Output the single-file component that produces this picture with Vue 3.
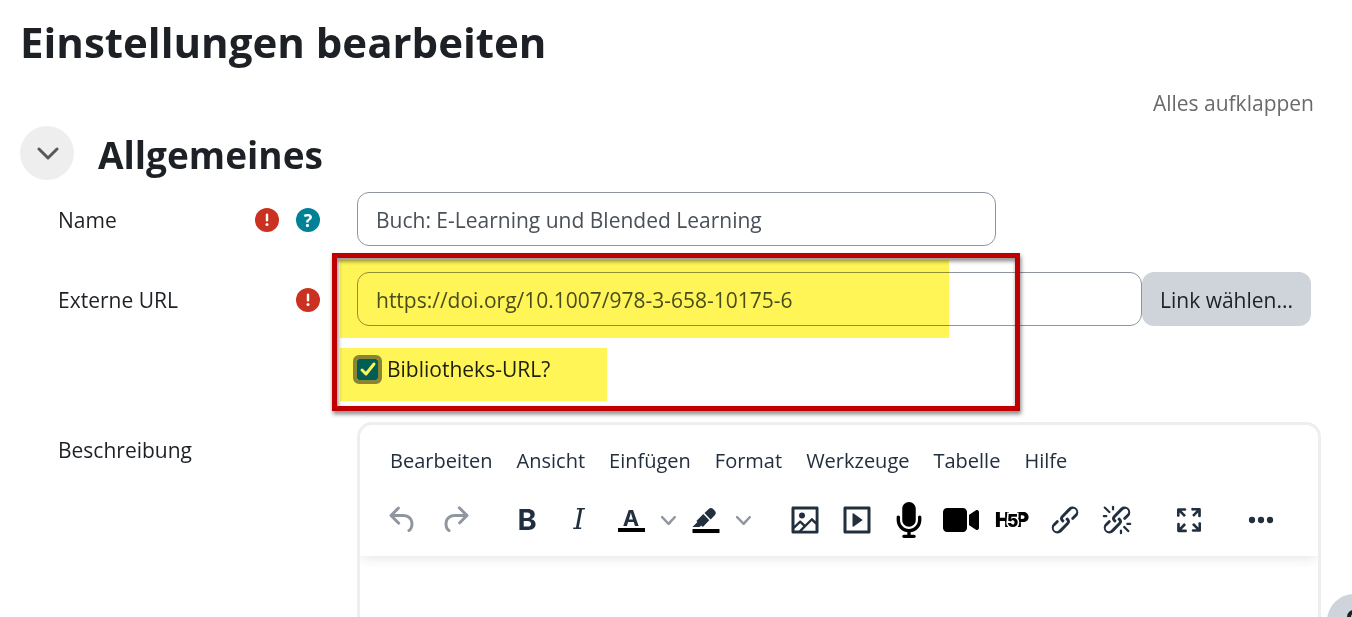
<script setup>
import { ref } from 'vue'

const name = ref('Buch: E-Learning und Blended Learning')
const url = ref('https://doi.org/10.1007/978-3-658-10175-6')
const isLibraryUrl = ref(true)

const menus = ['Bearbeiten', 'Ansicht', 'Einfügen', 'Format', 'Werkzeuge', 'Tabelle', 'Hilfe']
</script>

<template>
  <main class="page">
    <h1 class="title">Einstellungen bearbeiten</h1>

    <div class="expand-row">
      <a href="#" class="expand-all">Alles aufklappen</a>
    </div>

    <form class="form" @submit.prevent>
      <div class="section-head">
        <button type="button" class="toggle" aria-label="Allgemeines einklappen" aria-expanded="true">
          <svg width="24" height="24" viewBox="0 0 24 24" fill="none" stroke="#585858" stroke-width="3" stroke-linecap="round" stroke-linejoin="round">
            <path d="M4 8l9 9 9-9" />
          </svg>
        </button>
        <h2 class="section-title">Allgemeines</h2>
      </div>

      <div class="row">
        <div class="label-cell">
          <label for="name">Name</label>
          <span class="marks">
            <svg class="mark" viewBox="0 0 24 24" role="img" aria-label="Erforderlich">
              <circle cx="12" cy="12" r="12" fill="#ca3120" />
              <path d="M12 6.8v5.4" stroke="#fff" stroke-width="2.4" stroke-linecap="round" />
              <circle cx="12" cy="16.6" r="1.5" fill="#fff" />
            </svg>
            <button type="button" class="help" aria-label="Hilfe zu Name">?</button>
          </span>
        </div>
        <div class="field-cell">
          <input id="name" v-model="name" class="text-input name-input" type="text" />
        </div>
      </div>

      <div class="row url-row">
        <div class="label-cell">
          <label for="url">Externe URL</label>
          <span class="marks">
            <svg class="mark" viewBox="0 0 24 24" role="img" aria-label="Erforderlich">
              <circle cx="12" cy="12" r="12" fill="#ca3120" />
              <path d="M12 6.8v5.4" stroke="#fff" stroke-width="2.4" stroke-linecap="round" />
              <circle cx="12" cy="16.6" r="1.5" fill="#fff" />
            </svg>
          </span>
        </div>
        <div class="field-cell">
          <div class="url-group">
            <input id="url" v-model="url" class="text-input url-input" type="text" />
            <button type="button" class="choose">Link wählen...</button>
          </div>
          <div class="check-row">
            <input id="library" v-model="isLibraryUrl" type="checkbox" class="check" />
            <label for="library">Bibliotheks-URL?</label>
          </div>
          <div class="highlight highlight-url"></div>
          <div class="highlight highlight-check"></div>
          <div class="frame"></div>
        </div>
      </div>

      <div class="row">
        <div class="label-cell">
          <label for="description">Beschreibung</label>
        </div>
        <div class="editor">
          <div class="editor-head">
            <div class="menubar">
              <button v-for="menu in menus" :key="menu" type="button" class="menu">{{ menu }}</button>
            </div>
            <div class="toolbar">
              <div class="group">
                <button type="button" class="tool muted" aria-label="Rückgängig">
                  <svg class="icon" viewBox="0 0 24 24"><path d="M6.4 8H12c3.7 0 6.2 2 6.8 5.1.6 2.7-.4 5.6-2.3 6.8a1 1 0 0 1-1-1.8c1.1-.6 1.8-2.7 1.4-4.6-.5-2.1-2.1-3.5-4.9-3.5H6.4l3.3 3.3a1 1 0 1 1-1.4 1.4l-5-5a1 1 0 0 1 0-1.4l5-5a1 1 0 0 1 1.4 1.4L6.4 8Z" /></svg>
                </button>
                <button type="button" class="tool muted" aria-label="Wiederholen">
                  <svg class="icon" viewBox="0 0 24 24"><path d="M17.6 10H12c-2.8 0-4.4 1.4-4.9 3.5-.4 2 .3 4 1.4 4.6a1 1 0 1 1-1 1.8c-2-1.2-2.9-4.1-2.3-6.8.6-3 3-5.1 6.8-5.1h5.6l-3.3-3.3a1 1 0 1 1 1.4-1.4l5 5a1 1 0 0 1 0 1.4l-5 5a1 1 0 0 1-1.4-1.4l3.3-3.3Z" /></svg>
                </button>
              </div>

              <div class="group">
                <button type="button" class="tool bold" aria-label="Fett">B</button>
                <button type="button" class="tool italic" aria-label="Kursiv">I</button>
                <span class="split">
                  <button type="button" class="tool color" aria-label="Textfarbe">
                    <span class="color-letter">A</span>
                    <span class="swatch"></span>
                  </button>
                  <button type="button" class="chevron" aria-label="Textfarbe wählen">
                    <svg width="15" height="15" viewBox="0 0 10 10"><path d="M8.7 2.2c.3-.3.8-.3 1 0 .4.4.4.9 0 1.2L5.7 7.8c-.3.3-.9.3-1.2 0L.2 3.4a.8.8 0 0 1 0-1.2c.3-.3.8-.3 1.1 0L5 6l3.7-3.8Z" /></svg>
                  </button>
                  <button type="button" class="tool" aria-label="Hintergrundfarbe">
                    <svg class="icon" viewBox="0 0 24 24">
                      <path d="M7.7 16.7H3l3.3-3.3-.7-.8L10.2 8l4 4.1-4 4.2c-.2.2-.6.2-.8 0l-.6-.7-1.1 1.1zm5-7.5L11 7.4l3-2.9a2 2 0 0 1 2.6 0L18 6c.7.7.7 2 0 2.7l-2.9 2.9-1.8-1.8-.5-.6" />
                      <path d="M3 18h18v2.7H3z" fill="#000" />
                    </svg>
                  </button>
                  <button type="button" class="chevron" aria-label="Hintergrundfarbe wählen">
                    <svg width="15" height="15" viewBox="0 0 10 10"><path d="M8.7 2.2c.3-.3.8-.3 1 0 .4.4.4.9 0 1.2L5.7 7.8c-.3.3-.9.3-1.2 0L.2 3.4a.8.8 0 0 1 0-1.2c.3-.3.8-.3 1.1 0L5 6l3.7-3.8Z" /></svg>
                  </button>
                </span>
              </div>

              <div class="group">
                <button type="button" class="tool" aria-label="Bild">
                  <svg class="icon" viewBox="0 0 24 24"><path fill-rule="evenodd" d="m5 15.7 3.3-3.2c.3-.3.7-.3 1 0L12 15l4.1-4c.3-.4.8-.4 1 0l2 1.9V5H5v10.7ZM5 18V19h3l2.8-2.9-2-2L5 17.9Zm14-3-2.5-2.4-6.4 6.5H19v-4ZM4 3h16c.6 0 1 .4 1 1v16c0 .6-.4 1-1 1H4a1 1 0 0 1-1-1V4c0-.6.4-1 1-1Zm6 8a2 2 0 1 0 0-4 2 2 0 0 0 0 4Z" /></svg>
                </button>
                <button type="button" class="tool" aria-label="Multimedia">
                  <svg class="icon" viewBox="0 0 24 24"><path fill-rule="evenodd" d="M4 3h16c.6 0 1 .4 1 1v16c0 .6-.4 1-1 1H4a1 1 0 0 1-1-1V4c0-.6.4-1 1-1Zm1 2v14h14V5H5Zm4.8 2.6 5.6 4a.5.5 0 0 1 0 .8l-5.6 4A.5.5 0 0 1 9 16V8a.5.5 0 0 1 .8-.4Z" /></svg>
                </button>
                <button type="button" class="tool media" aria-label="Audio aufnehmen">
                  <svg class="icon" viewBox="0 0 384 512"><path d="M192 0C139 0 96 43 96 96V256c0 53 43 96 96 96s96-43 96-96V96c0-53-43-96-96-96zM64 216c0-13.3-10.7-24-24-24s-24 10.7-24 24v40c0 89.1 66.2 162.7 152 174.4V464H120c-13.3 0-24 10.7-24 24s10.7 24 24 24h72 72c13.3 0 24-10.7 24-24s-10.7-24-24-24H216V430.4c85.8-11.7 152-85.3 152-174.4V216c0-13.3-10.7-24-24-24s-24 10.7-24 24v40c0 70.7-57.3 128-128 128s-128-57.3-128-128V216z" /></svg>
                </button>
                <button type="button" class="tool media" aria-label="Video aufnehmen">
                  <svg class="icon" viewBox="0 0 576 512"><path d="M0 128C0 92.7 28.7 64 64 64H320c35.3 0 64 28.7 64 64V384c0 35.3-28.7 64-64 64H64c-35.3 0-64-28.7-64-64V128zM559.1 99.8c10.4 5.6 16.9 16.4 16.9 28.2V384c0 11.8-6.5 22.6-16.9 28.2s-23 5-32.9-1.6l-96-64L416 337.1V320 192 174.9l14.2-9.5 96-64c9.8-6.5 22.4-7.2 32.9-1.6z" /></svg>
                </button>
                <button type="button" class="tool media" aria-label="H5P">
                  <svg class="icon h5p" viewBox="0 0 36 36">
                    <text x="0" y="25">H</text>
                    <text x="21" y="25">P</text>
                    <path d="M10 17h13v3H10z" />
                    <text class="five" x="12" y="25">5</text>
                  </svg>
                </button>
                <button type="button" class="tool" aria-label="Link">
                  <svg class="icon" viewBox="0 0 24 24"><path d="M6.2 12.3a1 1 0 0 1 1.4 1.4l-2 2a2 2 0 1 0 2.6 2.8l4.8-4.8a1 1 0 0 0 0-1.4 1 1 0 1 1 1.4-1.3 2.9 2.9 0 0 1 0 4L9.6 20a3.9 3.9 0 0 1-5.5-5.5l2-2Zm11.6-.6a1 1 0 0 1-1.4-1.4l2-2a2 2 0 1 0-2.6-2.8L11 10.3a1 1 0 0 0 0 1.4A1 1 0 1 1 9.6 13a2.9 2.9 0 0 1 0-4L14.4 4a3.9 3.9 0 0 1 5.5 5.5l-2 2Z" /></svg>
                </button>
                <button type="button" class="tool" aria-label="Link entfernen">
                  <svg class="icon" viewBox="0 0 24 24"><path d="M6.2 12.3a1 1 0 0 1 1.4 1.4l-2 2a2 2 0 1 0 2.6 2.8l4.8-4.8a1 1 0 0 0 0-1.4 1 1 0 1 1 1.4-1.3 2.9 2.9 0 0 1 0 4L9.6 20a3.9 3.9 0 0 1-5.5-5.5l2-2Zm11.6-.6a1 1 0 0 1-1.4-1.4l2.1-2a2 2 0 1 0-2.7-2.8L11 10.3a1 1 0 0 0 0 1.4A1 1 0 1 1 9.6 13a2.9 2.9 0 0 1 0-4L14.4 4a3.9 3.9 0 0 1 5.5 5.5l-2 2ZM7.6 6.3a.8.8 0 0 1-1 1.1L3.3 4.2a.7.7 0 1 1 1-1l3.2 3.1ZM5.1 8.6a.8.8 0 0 1 0 1.5H3a.8.8 0 0 1 0-1.5H5Zm5-3.5a.8.8 0 0 1-1.5 0V3a.8.8 0 0 1 1.5 0V5Zm6 11.8a.8.8 0 0 1 1-1l3.2 3.2a.8.8 0 0 1-1 1L16 17Zm-2.2 2a.8.8 0 0 1 1.5 0V21a.8.8 0 0 1-1.5 0V19Zm5-3.5a.7.7 0 1 1 0-1.5H21a.8.8 0 0 1 0 1.5H19Z" /></svg>
                </button>
              </div>

              <div class="group">
                <button type="button" class="tool" aria-label="Vollbild">
                  <svg class="icon" viewBox="0 0 24 24"><path d="m15.3 10-1.2-1.3 2.9-3h-2.3a.9.9 0 1 1 0-1.7H19c.5 0 .9.4.9.9v4.4a.9.9 0 1 1-1.8 0V7l-2.9 3Zm0 4 3 3v-2.3a.9.9 0 1 1 1.7 0V19c0 .5-.4.9-.9.9h-4.4a.9.9 0 1 1 0-1.8H17l-3-2.9 1.3-1.2ZM10 15.4l-2.9 3h2.3a.9.9 0 1 1 0 1.7H5a.9.9 0 0 1-.9-.9v-4.4a.9.9 0 1 1 1.8 0V17l2.9-3 1.2 1.3ZM8.7 10 5.7 7v2.3a.9.9 0 0 1-1.7 0V5c0-.5.4-.9.9-.9h4.4a.9.9 0 0 1 0 1.8H7l3 2.9-1.3 1.2Z" /></svg>
                </button>
              </div>

              <div class="group">
                <button type="button" class="tool" aria-label="Mehr anzeigen">
                  <svg class="icon" viewBox="0 0 24 24"><circle cx="6" cy="12" r="2.1" /><circle cx="12" cy="12" r="2.1" /><circle cx="18" cy="12" r="2.1" /></svg>
                </button>
              </div>
            </div>
          </div>
          <textarea id="description" class="editor-body"></textarea>
        </div>
      </div>
    </form>

    <button type="button" class="footer-help" aria-label="Hilfe">
      <svg width="24" height="24" viewBox="0 0 24 24" fill="none" stroke="#1d2125" stroke-width="4" stroke-linecap="round">
        <path d="M7 8c0-7 11-7 11-1 0 4-6 4-6 9" />
        <path d="M12 22v0" />
      </svg>
    </button>
  </main>
</template>

<style>
body {
  margin: 0;
  background: #fff;
}
</style>

<style scoped>
.page {
  box-sizing: border-box;
  height: 100vh;
  overflow: hidden;
  padding: 15px 31px 0 20px;
  color: #1d2125;
  font-family: 'Open Sans', 'Noto Sans', sans-serif;
  font-size: 21px;
  line-height: 30px;
}

button,
input,
textarea {
  font: inherit;
  color: inherit;
}

button {
  padding: 0;
  border: 0;
  background: none;
}

.title,
.section-title {
  margin: 0;
  font-weight: 700;
  line-height: 54px;
}

.title {
  font-size: 42px;
}

.expand-row {
  display: flex;
  justify-content: flex-end;
  padding: 19px 7px 0 0;
}

.expand-all {
  color: #6a6a6a;
  text-decoration: none;
}

.section-head {
  display: flex;
  align-items: center;
  gap: 24px;
  height: 54px;
  padding: 8px 0 12px;
}

.toggle {
  display: flex;
  align-items: center;
  justify-content: center;
  width: 54px;
  height: 54px;
  border-radius: 50%;
  background: #eee;
}

.section-title {
  padding-top: 4px;
  font-size: 37px;
}

.row {
  display: grid;
  grid-template-columns: 262px minmax(0, 1fr);
  column-gap: 37px;
  padding-left: 38px;
}

.url-row {
  padding-top: 24px;
  padding-bottom: 38px;
}

.label-cell {
  display: flex;
  align-items: center;
  justify-content: space-between;
  height: 56px;
}

.marks {
  display: flex;
  align-items: center;
  gap: 17px;
}

.mark,
.help {
  width: 24px;
  height: 24px;
}

.help {
  border-radius: 50%;
  background: #008196;
  color: #fff;
  font-size: 18px;
  font-weight: 700;
  line-height: 24px;
}

.field-cell {
  position: relative;
}

.text-input {
  box-sizing: border-box;
  height: 54px;
  padding: 2px 18px 0;
  border: 1px solid #8f959e;
  border-radius: 12px;
  background: #fff;
  color: #495057;
}

.name-input {
  width: 100%;
  max-width: 639px;
}

.url-group {
  display: flex;
  margin-right: 10px;
}

.url-input {
  flex: 1;
  min-width: 0;
}

.choose {
  height: 54px;
  padding: 2px 18px 0;
  border-radius: 12px;
  background: #ced4da;
}

.check-row {
  display: flex;
  align-items: center;
  gap: 9px;
  padding-top: 28px;
}

.check {
  appearance: none;
  width: 21px;
  height: 21px;
  margin: 0;
  border-radius: 2px;
  outline: 4px solid #8a8a99;
  background: #fff;
}

.check:checked {
  background: #0062fa url("data:image/svg+xml,%3Csvg xmlns='http://www.w3.org/2000/svg' viewBox='0 0 21 21'%3E%3Cpath d='M5 11l4 4 8-10' fill='none' stroke='%23fff' stroke-width='3' stroke-linecap='round' stroke-linejoin='round'/%3E%3C/svg%3E") center / 21px 21px no-repeat;
}

.highlight {
  position: absolute;
  left: -17px;
  background: #fff557;
  mix-blend-mode: multiply;
  pointer-events: none;
}

.highlight-url {
  top: -12px;
  width: 609px;
  height: 78px;
}

.highlight-check {
  top: 76px;
  width: 267px;
  height: 53px;
}

.frame {
  position: absolute;
  top: -19px;
  left: -25px;
  box-sizing: border-box;
  width: 688px;
  height: 158px;
  border: 5px solid #c00000;
  filter: drop-shadow(1px 3px 2px rgba(0, 0, 0, 0.5));
  pointer-events: none;
}

.editor {
  box-sizing: border-box;
  min-width: 0;
  border: 3px solid #eee;
  border-radius: 15px;
  overflow: hidden;
}

.editor-head {
  padding: 21px 25px 18px;
  box-shadow: 0 3px 12px -2px rgba(34, 47, 62, 0.15);
}

.menubar {
  display: flex;
  gap: 24px;
  padding: 0 5px;
  color: #222f3e;
  font-size: 20px;
}

.toolbar {
  display: flex;
  gap: 36px;
  padding-top: 26px;
  color: #222f3e;
}

.group,
.split {
  display: flex;
  align-items: center;
}

.group {
  gap: 16px;
}

.tool {
  display: flex;
  align-items: center;
  justify-content: center;
  width: 36px;
  height: 36px;
}

.muted,
.chevron {
  color: #8f969f;
}

.media {
  color: #000;
}

.icon {
  width: 36px;
  height: 36px;
}

svg {
  display: block;
}

.icon,
.chevron svg {
  fill: currentColor;
}

.bold {
  font-family: Inter, sans-serif;
  font-size: 29px;
  font-weight: 700;
}

.italic {
  font-family: 'DejaVu Serif', serif;
  font-size: 28px;
  font-style: italic;
}

.color {
  flex-direction: column;
}

.color-letter {
  font-family: Inter, sans-serif;
  font-size: 22px;
  font-weight: 700;
  line-height: 20px;
}

.swatch {
  width: 27px;
  height: 4px;
  background: #000;
}

.split {
  gap: 12px;
}

.h5p {
  overflow: visible;
  font-family: Inter, sans-serif;
  font-size: 20px;
  font-weight: 900;
}

.five {
  font-size: 17px;
  stroke: #fff;
  stroke-width: 3px;
  paint-order: stroke;
}

.editor-body {
  display: block;
  box-sizing: border-box;
  width: 100%;
  height: 240px;
  border: 0;
  background: none;
  resize: none;
}

.footer-help {
  position: fixed;
  right: -29px;
  bottom: -31px;
  display: flex;
  align-items: center;
  justify-content: center;
  width: 54px;
  height: 54px;
  border-radius: 50%;
  background: #ced4da;
}
</style>
